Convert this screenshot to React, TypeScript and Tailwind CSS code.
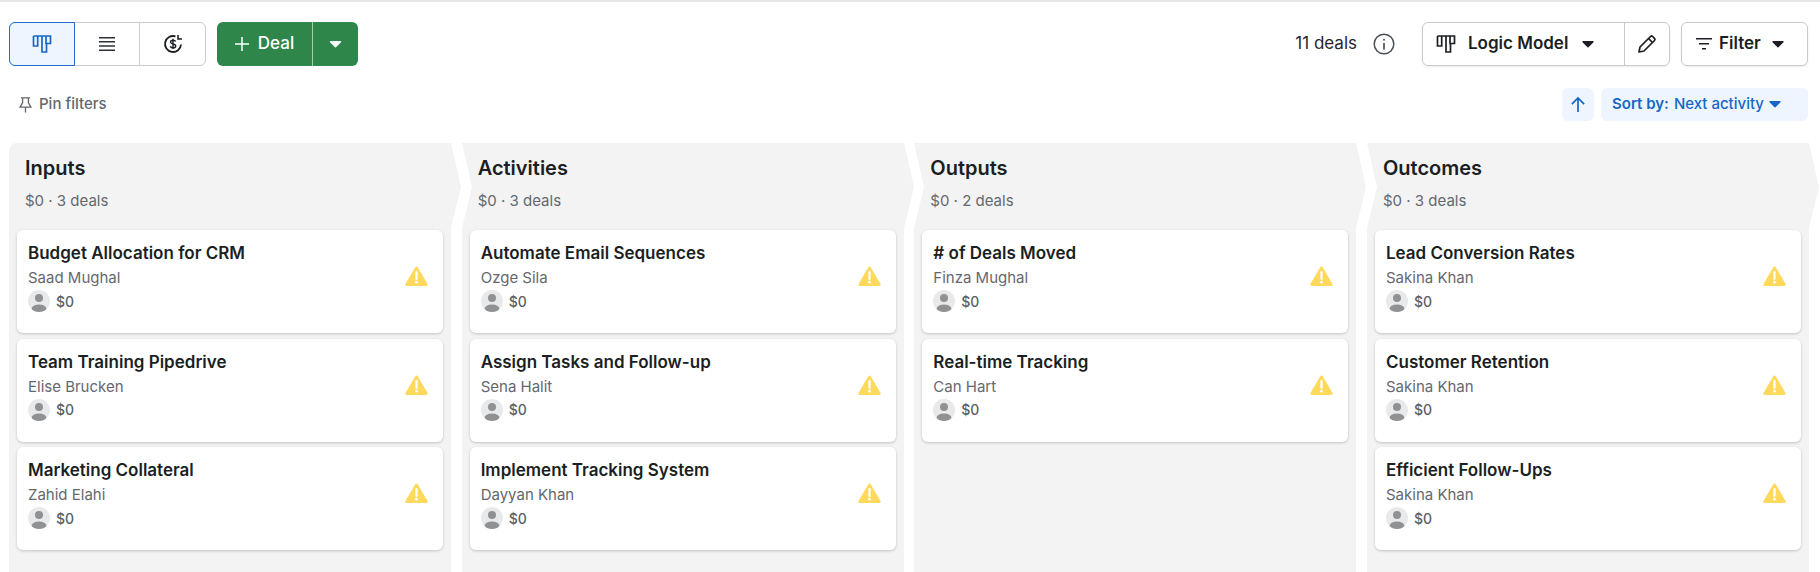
import { ChevronDown } from 'lucide-react';

interface Deal {
  title: string;
  owner: string;
}

interface Stage {
  name: string;
  count: number;
  deals: Deal[];
}

const stages: Stage[] = [
  {
    name: 'Inputs',
    count: 3,
    deals: [
      { title: 'Budget Allocation for CRM', owner: 'Saad Mughal' },
      { title: 'Team Training Pipedrive', owner: 'Elise Brucken' },
      { title: 'Marketing Collateral', owner: 'Zahid Elahi' },
    ],
  },
  {
    name: 'Activities',
    count: 3,
    deals: [
      { title: 'Automate Email Sequences', owner: 'Ozge Sila' },
      { title: 'Assign Tasks and Follow-up', owner: 'Sena Halit' },
      { title: 'Implement Tracking System', owner: 'Dayyan Khan' },
    ],
  },
  {
    name: 'Outputs',
    count: 2,
    deals: [
      { title: '# of Deals Moved', owner: 'Finza Mughal' },
      { title: 'Real-time Tracking', owner: 'Can Hart' },
    ],
  },
  {
    name: 'Outcomes',
    count: 3,
    deals: [
      { title: 'Lead Conversion Rates', owner: 'Sakina Khan' },
      { title: 'Customer Retention', owner: 'Sakina Khan' },
      { title: 'Efficient Follow-Ups', owner: 'Sakina Khan' },
    ],
  },
];

const BoardIcon = ({ className }: { className: string }) => (
  <svg viewBox="0 0 20 20" className={className} fill="none" stroke="currentColor" strokeWidth="1.7">
    <path d="M1.5 2h17v7.5h-4.500V2M5.700 2v10H1.500V2M5.700 2h4.300v0M10 2v16h4.500V9.500M5.700 2v0M10 2H5.700" />
  </svg>
);

const Caret = ({ className }: { className: string }) => (
  <svg viewBox="0 0 12 7" className={className} fill="currentColor">
    <path d="M1 0h10a.7.7 0 0 1 .5 1.200L6.500 6.300a.7.7 0 0 1-1 0L.5 1.200A.7.7 0 0 1 1 0z" />
  </svg>
);

const Warning = () => (
  <svg viewBox="0 0 24 21" className="w-[23px] h-[20px]">
    <path d="M10.700 1.200a1.500 1.500 0 0 1 2.600 0l10.300 17.600a1.400 1.400 0 0 1-1.300 2.100H1.700a1.400 1.400 0 0 1-1.300-2.100z" fill="#ffd95c" />
    <path d="M12 6.500v7" stroke="#fff" strokeWidth="2.400" strokeLinecap="round" />
    <circle cx="12" cy="17" r="1.400" fill="#fff" />
  </svg>
);

const Avatar = () => (
  <svg viewBox="0 0 22 22" className="w-[22px] h-[22px]">
    <defs>
      <clipPath id="avatar-clip">
        <circle cx="11" cy="11" r="11" />
      </clipPath>
    </defs>
    <circle cx="11" cy="11" r="11" fill="#e8e9ea" />
    <g clipPath="url(#avatar-clip)" fill="#8f9193">
      <circle cx="11" cy="8" r="4" />
      <ellipse cx="11" cy="19" rx="7.500" ry="4.500" />
    </g>
  </svg>
);

const DealCard = ({ deal }: { deal: Deal }) => (
  <div className="h-[103px] bg-white rounded-md shadow-[0_1px_3px_rgba(0,0,0,0.2)] pl-[11px] pr-[15px] pt-[12px] flex flex-col">
    <p className="text-[17px] leading-[22px] font-semibold text-[#1b1f23]">{deal.title}</p>
    <div className="flex items-center justify-between">
      <p className="mt-[4px] text-[15px] leading-[20px] text-[#65686f]">{deal.owner}</p>
      <Warning />
    </div>
    <div className="mt-[2px] flex items-center gap-[6px] pl-[0px]">
      <Avatar />
      <span className="text-[14px] font-medium text-[#5c5f66]">$0</span>
    </div>
  </div>
);

const Column = ({ stage, first }: { stage: Stage; first: boolean }) => (
  <div className={`relative w-[442px] shrink-0 bg-[#f3f3f3] px-[8px] ${first ? 'rounded-tl-lg' : ''}`}>
    {!first && (
      <svg viewBox="0 0 10 85" preserveAspectRatio="none" className="absolute left-0 top-0 w-[10px] h-[85px]">
        <path d="M0 0L10 44L0 85z" fill="#fff" />
      </svg>
    )}
    <svg viewBox="0 0 10 85" preserveAspectRatio="none" className="absolute left-full top-0 w-[10px] h-[85px]">
      <path d="M0 0L10 44L0 85z" fill="#f3f3f3" />
    </svg>
    <div className="h-[87px] pl-[8px] pt-[11px]">
      <h2 className="text-[20px] leading-[28px] font-semibold text-[#1b1f23]">{stage.name}</h2>
      <p className="mt-[9px] text-[15px] leading-[20px] text-[#65686f]">
        $0 · {stage.count} deals
      </p>
    </div>
    <div className="flex flex-col gap-[5.500px]">
      {stage.deals.map((d) => (
        <DealCard key={d.title} deal={d} />
      ))}
    </div>
  </div>
);

export default function App() {
  return (
    <div className="h-[572px] w-[1820px] overflow-hidden bg-white font-['Inter',sans-serif] text-[#1b1f23]">
      <div className="h-[2px] bg-[#e6e6e6]" />
      <div className="flex items-center justify-between pl-[9px] pr-[12px] pt-[20px]">
        <div className="flex items-center gap-[11px]">
          <div className="flex h-[44px] rounded-md border border-[#c9cacc] bg-white">
            <div className="-m-px w-[66px] flex items-center justify-center rounded-l-md border border-[#1f6fd1] bg-[#eef5fe] text-[#1567c6]">
              <BoardIcon className="w-[20px] h-[20px]" />
            </div>
            <div className="w-[66px] flex items-center justify-center border-r border-[#c9cacc] text-[#2b2f36]">
              <svg viewBox="0 0 18 16" className="w-[18px] h-[16px]" fill="currentColor">
                <path d="M1 1h16v1.600H1zM1 5h16v1.600H1zM1 9.200h16v1.600H1zM1 13.400h16V15H1z" />
              </svg>
            </div>
            <div className="w-[65px] flex items-center justify-center text-[#1b1f23]">
              <svg viewBox="0 0 20 20" className="w-[20px] h-[20px]" fill="none" stroke="currentColor" strokeWidth="1.800">
                <path d="M18 10.500A8 8 0 1 1 12.500 2.400" />
                <path d="M15 1v4h4" strokeWidth="1.600" />
                <path d="M12.700 7.500c-.500-1-1.500-1.300-2.700-1.300-1.400 0-2.500.700-2.500 1.900 0 2.700 5.200 1.100 5.200 3.900 0 1.200-1.100 1.900-2.600 1.900-1.300 0-2.300-.500-2.900-1.500M10 4.800v10.200" strokeWidth="1.400" />
              </svg>
            </div>
          </div>
          <div className="flex h-[44px] rounded-md bg-[#2e864b] text-white">
            <div className="w-[96px] flex items-center justify-center gap-[9px] border-r border-[#a5cdb2]">
              <svg viewBox="0 0 14 14" className="w-[14px] h-[14px]" stroke="currentColor" strokeWidth="1.500">
                <path d="M7 0v14M0 7h14" />
              </svg>
              <span className="text-[17px] font-medium">Deal</span>
            </div>
            <div className="w-[45px] flex items-center justify-center">
              <Caret className="w-[13px] h-[7px]" />
            </div>
          </div>
        </div>
        <div className="flex items-center">
          <span className="text-[17px] text-[#24272c]">11 deals</span>
          <svg viewBox="0 0 22 22" className="ml-[16px] w-[22px] h-[22px] text-[#4c4f55]" fill="none" stroke="currentColor" strokeWidth="1.500">
            <circle cx="11" cy="11" r="9.800" />
            <path d="M11 10v6.500" strokeWidth="1.700" />
            <circle cx="11" cy="6.700" r="1" fill="currentColor" stroke="none" />
          </svg>
          <div className="ml-[27px] flex h-[44px] w-[248px] rounded-md border border-[#c9cacc] shadow-[0_1px_2px_rgba(0,0,0,0.08)]">
            <div className="flex-1 flex items-center pl-[13px] border-r border-[#c9cacc]">
              <BoardIcon className="w-[20px] h-[20px]" />
              <span className="ml-[12px] text-[17px] font-semibold">Logic Model</span>
              <Caret className="ml-[14px] w-[12px] h-[7px]" />
            </div>
            <div className="w-[44px] flex items-center justify-center">
              <svg viewBox="0 0 20 20" className="w-[20px] h-[20px]" fill="none" stroke="currentColor" strokeWidth="1.700" strokeLinejoin="round">
                <path d="M2 18l1-5L13.500 2.500a1.500 1.500 0 0 1 2.100 0l1.900 1.900a1.500 1.500 0 0 1 0 2.100L7 17z" />
                <path d="M11.500 4.500l4 4" />
              </svg>
            </div>
          </div>
          <div className="ml-[11px] flex h-[44px] w-[127px] items-center rounded-md border border-[#c9cacc] pl-[14px] shadow-[0_1px_2px_rgba(0,0,0,0.08)]">
            <svg viewBox="0 0 16 12" className="w-[16px] h-[12px]" fill="currentColor">
              <path d="M0 0h16v1.600H0zM3 5h10v1.600H3zM6 10h4v1.600H6z" />
            </svg>
            <span className="ml-[7px] text-[17px] font-semibold">Filter</span>
            <Caret className="ml-[11px] w-[12px] h-[7px]" />
          </div>
        </div>
      </div>
      <div className="mt-[22px] flex items-center justify-between pl-[18px] pr-[12px]">
        <div className="flex items-center gap-[6px] text-[#64676e]">
          <svg viewBox="0 0 18 20" className="w-[15px] h-[18px]" fill="none" stroke="currentColor" strokeWidth="1.600">
            <path d="M3.500 1.500h11M5.500 1.500v6L2.500 12.500h13L12.500 7.500v-6M9 12.500V19" />
          </svg>
          <span className="text-[15px] font-medium">Pin filters</span>
        </div>
        <div className="flex items-center gap-[7px] text-[#1567c6]">
          <div className="w-[32px] h-[33px] rounded-md bg-[#eef5fe] flex items-center justify-center">
            <svg viewBox="0 0 16 18" className="w-[16px] h-[17px]" fill="none" stroke="currentColor" strokeWidth="1.800">
              <path d="M8 17V2M1.500 8.500L8 2l6.500 6.500" />
            </svg>
          </div>
          <div className="w-[207px] h-[33px] rounded-md bg-[#eef5fe] flex items-center pl-[11px]">
            <span className="text-[15px] font-semibold">Sort by:</span>
            <span className="ml-[5px] text-[15px] font-medium">Next activity</span>
            <Caret className="ml-[5px] w-[12px] h-[7px]" />
          </div>
        </div>
      </div>
      <div className="mt-[22px] flex gap-[10.670px] pl-[9px] h-[429px]">
        {stages.map((s, i) => (
          <Column key={s.name} stage={s} first={i === 0} />
        ))}
      </div>
    </div>
  );
}
